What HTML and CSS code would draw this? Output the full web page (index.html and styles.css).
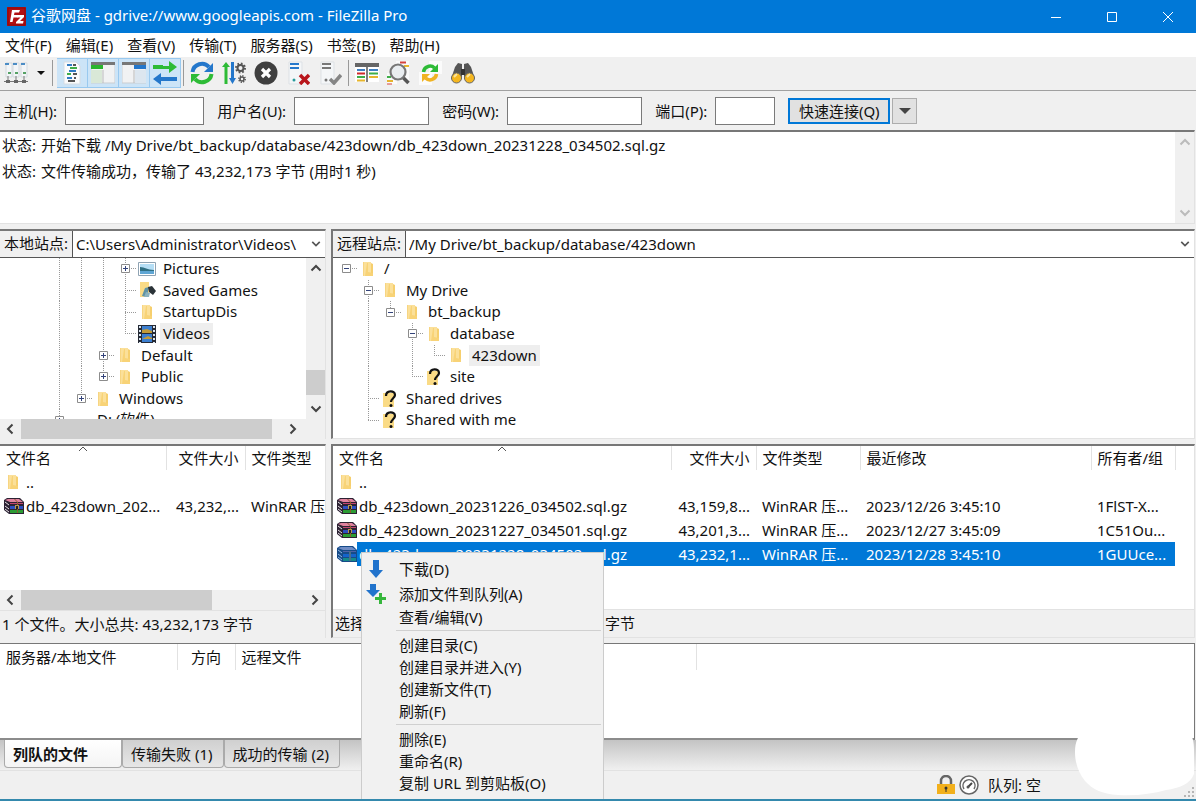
FILE: index.html
```html
<!DOCTYPE html>
<html lang="zh-CN">
<head>
  <meta charset="UTF-8" />
  <meta name="viewport" content="width=device-width,initial-scale=1.0"/>
  <title>谷歌网盘 - gdrive://www.googleapis.com - FileZilla Pro</title>
  <link rel="stylesheet" href="styles.css">
</head>
<body>
  <!-- shared icons -->
  <svg class="defs" aria-hidden="true">
    <symbol id="folder" viewBox="0 0 16 16">
      <path d="M3 1h8v14H3z" fill="#fbe09a"/><path d="M11 2l2 1v12h-2z" fill="#f6cf6e"/><path d="M7 2h1v9l5 1v3H5z" fill="#f8d377"/><path d="M3 1h1v14H3z" fill="#f7d582"/>
    </symbol>
    <symbol id="unknown" viewBox="0 0 16 18">
      <path d="M1 3h11v14H1z" fill="#fadb86"/>
      <path d="M4 6c0-6 9-6 9-1 0 3-4 3.500-4 7" fill="none" stroke="#111" stroke-width="2.200"/><circle cx="9" cy="15.500" r="1.500" fill="#111"/>
    </symbol>
    <symbol id="pictures" viewBox="0 0 18 14">
      <path d="M.5.5h17v13H.5z" fill="#fff" stroke="#8fa3b3"/><path d="M2 2h14v10H2z" fill="#b5def5"/><path d="M2 5c5 0 7 3 14 3v2H2z" fill="#2f6f83"/><path d="M2 9h14v3H2z" fill="#5fa6d4"/>
    </symbol>
    <symbol id="games" viewBox="0 0 18 18">
      <path d="M2 1h9v15H2z" fill="#fadb86"/><path d="M4 15l3-8 4-1-2 10z" fill="#5f93a5"/><path d="M10 6l4-1 4 5-3 4-4-3z" fill="#2b3338"/><path d="M8 11l4 1-1 4H6z" fill="#8ab2bd"/>
    </symbol>
    <symbol id="videos" viewBox="0 0 18 18">
      <path d="M0 0h18v18H0z" fill="#262b36"/><path d="M4 1h10v7H4zM4 9h10v8H4z" fill="#3c7fd0"/><path d="M4 5l5-1 5 2v2H4zM4 14l6-3 4 2v1z" fill="#c29a37"/>
      <path d="M2 1v17M16 1v17" stroke="#dbe7f2" stroke-width="2" stroke-dasharray="2 2"/>
    </symbol>
    <symbol id="plus" viewBox="0 0 9 9"><path d="M.5.5h8v8h-8z" fill="#fff" stroke="#8c8c8c"/><path d="M2 4.500h5M4.500 2v5" stroke="#33437a"/></symbol>
    <symbol id="minus" viewBox="0 0 9 9"><path d="M.5.5h8v8h-8z" fill="#fff" stroke="#8c8c8c"/><path d="M2 4.500h5" stroke="#33437a"/></symbol>
    <symbol id="rar" viewBox="0 0 20 16">
      <path d="M0 2l3-2h13l4 4v12H5L0 12z" fill="#2c2233"/>
      <path d="M1 2l3-1h11l4 3H6z" fill="#e0829f"/><path d="M6 5h13v1H6z" fill="#c4456f"/>
      <path d="M6 8h13v3H6z" fill="#2b4fc0"/><path d="M6 12h13v3H6z" fill="#2c9c34"/>
      <path d="M1 4l4 3M1 8l4 3M1 11l4 3" stroke="#e8e2e6" fill="none"/>
      <path d="M10 1l3 3v11h1V4l-3-3z" fill="#8a5f2e"/><path d="M11 7h4v4h-4z" fill="#b9974f"/><path d="M12 8h2v3h-2z" fill="#222"/>
    </symbol>
    <symbol id="rar-sel" viewBox="0 0 20 16">
      <path d="M0 2l3-2h13l4 4v12H5L0 12z" fill="#164b88"/>
      <path d="M1 2l3-1h11l4 3H6z" fill="#6f8cc4"/><path d="M6 5h13v1H6z" fill="#4f60a6"/>
      <path d="M6 8h13v3H6z" fill="#1464cc"/><path d="M6 12h13v3H6z" fill="#158a8a"/>
      <path d="M1 4l4 3M1 8l4 3M1 11l4 3" stroke="#8fb6e2" fill="none"/><path d="M12 5h2v10h-2z" fill="#4a6f88"/>
    </symbol>
    <symbol id="up" viewBox="0 0 12 12"><path d="M1.500 8.500L6 4l4.500 4.500" fill="none" stroke="currentColor" stroke-width="2"/></symbol>
    <symbol id="down" viewBox="0 0 12 12"><path d="M1.500 3.500L6 8l4.500-4.500" fill="none" stroke="currentColor" stroke-width="2"/></symbol>
    <symbol id="left" viewBox="0 0 12 12"><path d="M8.500 1.500L4 6l4.500 4.500" fill="none" stroke="currentColor" stroke-width="2"/></symbol>
    <symbol id="right" viewBox="0 0 12 12"><path d="M3.500 1.500L8 6l-4.500 4.500" fill="none" stroke="currentColor" stroke-width="2"/></symbol>
    <symbol id="sort" viewBox="0 0 10 6"><path d="M1 5l4-4 4 4" fill="none" stroke="#555"/></symbol>
    <symbol id="page" viewBox="0 0 24 24"><path d="M4 1h12l4 4v18H4z" fill="#fafbfc" stroke="#d5dce3"/></symbol>
    <symbol id="server" viewBox="0 0 24 24"><path d="M3 1h13v22H3z" fill="#f4f6f8" stroke="#dde1e5"/></symbol>
  </svg>

  <div class="window">
    <header class="titlebar">
      <svg class="logo" viewBox="0 0 19 19">
        <path d="M0 0h19v19H0z" fill="#b10f12"/><path d="M1 1h17v17H1z" fill="none" stroke="#8d0a0c"/>
        <path d="M5 3h8l-1 2.500H7.500L7 8h4l-.5 2.500h-4L5.500 15H3z" fill="#fff"/><path d="M10 8h7v2l-4 4h3.500L16 16.500H9V15l4.500-4.500H10z" fill="#fff"/>
      </svg>
      <h1>谷歌网盘 - gdrive://www.googleapis.com - FileZilla Pro</h1>
      <div class="win-buttons">
        <button aria-label="最小化"><svg viewBox="0 0 12 12"><path d="M1 6.500h10"/></svg></button>
        <button aria-label="最大化"><svg viewBox="0 0 12 12"><path d="M1.500 1.500h9v9h-9z"/></svg></button>
        <button aria-label="关闭"><svg viewBox="0 0 12 12"><path d="M1 1l10 10M11 1L1 11"/></svg></button>
      </div>
    </header>

    <nav class="menubar">
      <button>文件(F)</button>
      <button>编辑(E)</button>
      <button>查看(V)</button>
      <button>传输(T)</button>
      <button>服务器(S)</button>
      <button>书签(B)</button>
      <button>帮助(H)</button>
    </nav>

    <div class="toolbar">
      <button aria-label="站点管理器"><svg viewBox="0 0 24 24">
        <path d="M2 2h6v14H2zM9 2h6v14H9zM17 2h6v14h-6z" fill="#f3f5f7" stroke="#d3d9de"/>
        <path d="M1 3h4M9 3h4M17 3h4" stroke="#4b8cc5" stroke-width="2"/><path d="M4 12h3M11 12h3M19 12h3" stroke="#55a165" stroke-width="2"/>
        <path d="M4 15v4M12 15v4M20 15v4M0 20.500h24" stroke="#777" fill="none"/><path d="M2 19h4v3H2zM10 19h4v3h-4zM18 19h4v3h-4z" fill="#666"/>
      </svg></button>
      <button class="arrow" aria-label="站点列表"><svg viewBox="0 0 8 8"><path d="M0 2h8L4 6z" fill="#111"/></svg></button>
      <span class="sep"></span>
      <div class="toggles">
        <button aria-label="消息日志" aria-pressed="true"><svg viewBox="0 0 24 24"><use href="#page"/>
          <path d="M7 4h5M9 10h7M7 17h5" stroke="#2f7bc4" stroke-width="2"/><path d="M10 7h7M7 13h4" stroke="#3fae49" stroke-width="2"/><path d="M13 4h3M13 13h4M8 20h7M14 17h2" stroke="#555" stroke-width="2"/></svg></button>
        <button aria-label="本地目录树" aria-pressed="true"><svg viewBox="0 0 24 24"><path d="M0 2h24v20H0z" fill="#f1f2f3" stroke="#c9cdd1"/><path d="M0 1h24v3H0z" fill="#777"/><path d="M0 4h12v4H0z" fill="#2ab52f"/><path d="M0 9h11v13H0z" fill="#d9e8d7"/><path d="M12 9v13" stroke="#bbb"/></svg></button>
        <button aria-label="远程目录树" aria-pressed="true"><svg viewBox="0 0 24 24"><path d="M0 2h24v20H0z" fill="#f1f2f3" stroke="#c9cdd1"/><path d="M0 1h24v3H0z" fill="#777"/><path d="M12 4h12v4H12z" fill="#2477cb"/><path d="M13 9h11v13H13z" fill="#dce6ef"/><path d="M12 9v13" stroke="#bbb"/></svg></button>
        <button aria-label="传输队列" aria-pressed="true"><svg viewBox="0 0 24 24"><path d="M0 4h10v1h6V0l8 6-8 6V8H0z" fill="#2dbb36"/><path d="M24 16H8v-4l-8 6 8 6v-4h16z" fill="#2477cb"/></svg></button>
      </div>
      <span class="sep"></span>
      <button aria-label="刷新"><svg viewBox="0 0 24 24"><path d="M2.500 11A9.500 9.500 0 0 1 19 6" fill="none" stroke="#2477cb" stroke-width="4"/><path d="M23 2v9h-9z" fill="#2477cb"/><path d="M21.500 13A9.500 9.500 0 0 1 5 18" fill="none" stroke="#2dbb36" stroke-width="4"/><path d="M1 22v-9h9z" fill="#2dbb36"/></svg></button>
      <button aria-label="处理队列"><svg viewBox="0 0 24 24"><path d="M4 1l4 5H5.500v17h-3V6H0z" fill="#2dbb36"/><path d="M9 1h3v16h2l-3.500 6L7 17h2z" fill="#2477cb"/><g fill="none" stroke="#555"><circle cx="18.500" cy="7" r="3" stroke-width="2"/><circle cx="18.500" cy="7" r="4.500" stroke-width="2" stroke-dasharray="1.700 1.800"/><circle cx="20" cy="18" r="2" stroke-width="1.500"/><circle cx="20" cy="18" r="3.200" stroke-width="1.500" stroke-dasharray="1.200 1.300"/></g></svg></button>
      <button aria-label="取消"><svg viewBox="0 0 24 24"><circle cx="12" cy="12" r="11.500" fill="#3f3f3f"/><path d="M8 8l8 8M16 8l-8 8" stroke="#fff" stroke-width="3.200"/></svg></button>
      <button aria-label="断开连接"><svg viewBox="0 0 24 24"><use href="#server"/><path d="M4 3h9M4 7h9" stroke="#2477cb" stroke-width="2"/><circle cx="8" cy="19" r="1.500" fill="#2a9b9b"/><path d="M14 14l9 9M23 14l-9 9" stroke="#b8151b" stroke-width="3.500"/></svg></button>
      <button aria-label="重新连接"><svg viewBox="0 0 24 24"><use href="#server"/><path d="M4 3h9M4 7h9" stroke="#777" stroke-width="2"/><circle cx="8" cy="19" r="1.500" fill="#777"/><path d="M12 18l4 4 7-8" fill="none" stroke="#858585" stroke-width="3.500"/></svg></button>
      <span class="sep"></span>
      <button aria-label="过滤"><svg viewBox="0 0 24 24"><path d="M0 2h24v19H0z" fill="#fff"/><path d="M0 2h24v4H0z" fill="#666"/><path d="M2 9h8M14 9h9" stroke="#3f7fc1" stroke-width="2"/><path d="M2 12.500h8" stroke="#d02a2a" stroke-width="2"/><path d="M14 12.500h9M2 16h8" stroke="#3fae49" stroke-width="2"/><path d="M14 16h9M2 19.500h8" stroke="#e7b52d" stroke-width="2"/><path d="M12 6v15" stroke="#555" stroke-width="1.500"/></svg></button>
      <button aria-label="目录对比"><svg viewBox="0 0 24 24"><path d="M9 0h13v20H9zM0 12h10v11H0z" fill="#fafafa"/><path d="M13 1.500h6" stroke="#d5433c" stroke-width="2"/><path d="M17 5h5" stroke="#e7b52d" stroke-width="2"/><path d="M0 16h4" stroke="#3fae49" stroke-width="2"/><path d="M0 20h6" stroke="#e7b52d" stroke-width="2"/><path d="M0 23h5" stroke="#d5433c"/><circle cx="11" cy="11" r="7.500" fill="#e9edf0" stroke="#777" stroke-width="2.200"/><path d="M16.500 17l5 5" stroke="#555" stroke-width="3.500"/></svg></button>
      <button aria-label="同步浏览"><svg viewBox="0 0 24 24"><path d="M10 0h13v13H10zM0 11h13v13H0z" fill="#fbfbfb"/><path d="M4.500 11a6.500 6.500 0 0 1 11-4" fill="none" stroke="#2dbb36" stroke-width="3.500"/><path d="M19 3v8h-8z" fill="#2dbb36"/><path d="M17.500 13a6.500 6.500 0 0 1-11 4" fill="none" stroke="#f0b323" stroke-width="3.500"/><path d="M3 21v-8h8z" fill="#f0b323"/></svg></button>
      <button aria-label="查找文件"><svg viewBox="0 0 24 24"><path d="M7 2l4 1v15H0l4-12zM17 2l-4 1v15h11L20 6z" fill="#555"/><path d="M10 8h4v6h-4z" fill="#333"/><circle cx="5.500" cy="17" r="5" fill="#f5b720" stroke="#666"/><circle cx="18.500" cy="17" r="5" fill="#f5b720" stroke="#666"/><path d="M3 16l3-3M16 16l3-3" stroke="#fce49a" stroke-width="2"/></svg></button>
    </div>

    <form class="quickconnect">
      <label for="host">主机(H):</label><input id="host" class="host" type="text">
      <label for="user">用户名(U):</label><input id="user" type="text">
      <label for="pass">密码(W):</label><input id="pass" type="password">
      <label for="port">端口(P):</label><input id="port" class="port" type="text">
      <button type="button" class="connect">快速连接(Q)</button>
      <button type="button" class="history" aria-label="历史记录"><svg viewBox="0 0 12 12"><path d="M0 3h12L6 9z" fill="#444"/></svg></button>
    </form>

    <main class="main">
      <section class="log">
        <div class="messages">
          <p><span>状态:</span>开始下载 /My Drive/bt_backup/database/423down/db_423down_20231228_034502.sql.gz</p>
          <p><span>状态:</span>文件传输成功，传输了 43,232,173 字节 (用时1 秒)</p>
        </div>
        <div class="vscroll disabled"><svg><use href="#up"/></svg><svg><use href="#down"/></svg></div>
      </section>

      <div class="panes">
        <section class="pane">
          <div class="sitebar">
            <label for="local">本地站点:</label>
            <div class="combo"><select id="local"><option>C:\Users\Administrator\Videos\</option></select><svg><use href="#down"/></svg></div>
          </div>
          <div class="tree-row">
            <div class="tree-view">
              <ul class="tree local">
                <li><i class="v"></i><i class="v"></i><i class="v"></i><i class="v h"><svg><use href="#plus"/></svg></i><b><svg class="pic"><use href="#pictures"/></svg></b><span>Pictures</span></li>
                <li><i class="v"></i><i class="v"></i><i class="v"></i><i class="v h"></i><b><svg class="big"><use href="#games"/></svg></b><span>Saved Games</span></li>
                <li><i class="v"></i><i class="v"></i><i class="v"></i><i class="v h"></i><b><svg><use href="#folder"/></svg></b><span>StartupDis</span></li>
                <li><i class="v"></i><i class="v"></i><i class="v"></i><i class="end"></i><b><svg class="big"><use href="#videos"/></svg></b><span class="current">Videos</span></li>
                <li><i class="v"></i><i class="v"></i><i class="v h"><svg><use href="#plus"/></svg></i><b><svg><use href="#folder"/></svg></b><span>Default</span></li>
                <li><i class="v"></i><i class="v"></i><i class="end"><svg><use href="#plus"/></svg></i><b><svg><use href="#folder"/></svg></b><span>Public</span></li>
                <li><i class="v"></i><i class="end"><svg><use href="#plus"/></svg></i><b><svg><use href="#folder"/></svg></b><span>Windows</span></li>
                <li><i class="v h"><svg><use href="#plus"/></svg></i><b></b><span>D: (软件)</span></li>
              </ul>
            </div>
            <div class="vscroll"><svg><use href="#up"/></svg><div class="track"><div class="thumb"></div></div><svg><use href="#down"/></svg></div>
          </div>
          <div class="hscroll tree-scroll"><svg><use href="#left"/></svg><div class="track"><div class="thumb"></div></div><svg><use href="#right"/></svg></div>
        </section>

        <section class="pane remote">
          <div class="sitebar">
            <label for="remote">远程站点:</label>
            <div class="combo"><select id="remote"><option>/My Drive/bt_backup/database/423down</option></select><svg><use href="#down"/></svg></div>
          </div>
          <div class="tree-view">
            <ul class="tree">
              <li><i class="h"><svg><use href="#minus"/></svg></i><b><svg><use href="#folder"/></svg></b><span>/</span></li>
              <li><i></i><i class="v h"><svg><use href="#minus"/></svg></i><b><svg><use href="#folder"/></svg></b><span>My Drive</span></li>
              <li><i></i><i class="v"></i><i class="end"><svg><use href="#minus"/></svg></i><b><svg><use href="#folder"/></svg></b><span>bt_backup</span></li>
              <li><i></i><i class="v"></i><i></i><i class="v h"><svg><use href="#minus"/></svg></i><b><svg><use href="#folder"/></svg></b><span>database</span></li>
              <li><i></i><i class="v"></i><i></i><i class="v"></i><i class="end"></i><b><svg><use href="#folder"/></svg></b><span class="current">423down</span></li>
              <li><i></i><i class="v"></i><i></i><i class="end"></i><b><svg class="big"><use href="#unknown"/></svg></b><span>site</span></li>
              <li><i></i><i class="v h"></i><b><svg class="big"><use href="#unknown"/></svg></b><span>Shared drives</span></li>
              <li><i></i><i class="end"></i><b><svg class="big"><use href="#unknown"/></svg></b><span>Shared with me</span></li>
            </ul>
          </div>
        </section>
      </div>

      <div class="panes">
        <section class="pane">
          <div class="list">
            <table class="local-files">
              <colgroup><col class="c-name"><col class="c-size"><col class="c-type"></colgroup>
              <thead><tr><th>文件名<svg class="sort"><use href="#sort"/></svg></th><th class="num">文件大小</th><th>文件类型</th></tr></thead>
              <tbody>
                <tr><td class="name"><div><b><svg class="dir"><use href="#folder"/></svg></b>..</div></td><td></td><td></td></tr>
                <tr><td class="name"><div><b><svg><use href="#rar"/></svg></b>db_423down_202...</div></td><td class="num">43,232,...</td><td>WinRAR 压缩文件</td></tr>
              </tbody>
            </table>
          </div>
          <div class="hscroll list-scroll"><svg><use href="#left"/></svg><div class="track"><div class="thumb"></div></div><svg><use href="#right"/></svg></div>
          <p class="summary">1 个文件。大小总共: 43,232,173 字节</p>
        </section>

        <section class="pane remote">
          <div class="list">
            <table class="remote-files">
              <colgroup><col class="c-name"><col class="c-size"><col class="c-type"><col class="c-date"><col class="c-owner"></colgroup>
              <thead><tr><th>文件名<svg class="sort"><use href="#sort"/></svg></th><th class="num">文件大小</th><th>文件类型</th><th>最近修改</th><th>所有者/组</th></tr></thead>
              <tbody>
                <tr><td class="name"><div><b><svg class="dir"><use href="#folder"/></svg></b>..</div></td><td></td><td></td><td></td><td></td></tr>
                <tr><td class="name"><div><b><svg><use href="#rar"/></svg></b>db_423down_20231226_034502.sql.gz</div></td><td class="num">43,159,8...</td><td>WinRAR 压...</td><td>2023/12/26 3:45:10</td><td>1FlST-X...</td></tr>
                <tr><td class="name"><div><b><svg><use href="#rar"/></svg></b>db_423down_20231227_034501.sql.gz</div></td><td class="num">43,201,3...</td><td>WinRAR 压...</td><td>2023/12/27 3:45:09</td><td>1C51Ou...</td></tr>
                <tr class="selected"><td class="name"><div><b><svg><use href="#rar-sel"/></svg></b>db_423down_20231228_034502.sql.gz</div></td><td class="num">43,232,1...</td><td>WinRAR 压...</td><td>2023/12/28 3:45:10</td><td>1GUUce...</td></tr>
              </tbody>
            </table>
          </div>
          <p class="summary">选择了 1 个文件。大小总共: 43,232,173 字节</p>
        </section>
      </div>

      <section class="queue">
        <table>
          <colgroup><col class="q-local"><col class="q-dir"><col class="q-remote"><col></colgroup>
          <thead><tr><th>服务器/本地文件</th><th class="mid">方向</th><th>远程文件</th><th></th></tr></thead>
        </table>
      </section>
    </main>

    <div class="tabs">
      <button class="active">列队的文件</button>
      <button>传输失败 (1)</button>
      <button>成功的传输 (2)</button>
    </div>

    <footer class="statusbar">
      <svg class="lock" viewBox="0 0 20 20"><path d="M5 10V6a5 5 0 0 1 10 0v4" fill="none" stroke="#666" stroke-width="2.500"/><path d="M1 9h18v10H1z" fill="#f2b01c"/><circle cx="10" cy="13" r="1.500" fill="#333"/><path d="M9.500 13h1v4h-1z" fill="#333"/></svg>
      <svg class="gauge" viewBox="0 0 20 20"><circle cx="10" cy="10" r="9" fill="#fff" stroke="#666" stroke-width="1.500"/><path d="M5 14a6 6 0 1 1 10 0" fill="none" stroke="#666" stroke-width="1.500"/><path d="M9 12l4-4" stroke="#444" stroke-width="2"/><circle cx="9" cy="12" r="1.500" fill="#555"/></svg>
      <span>队列: 空</span>
      <svg class="grip" viewBox="0 0 12 12"><path d="M8 0h2v2H8zM4 4h2v2H4zM8 4h2v2H8zM0 8h2v2H0zM4 8h2v2H4zM8 8h2v2H8z" fill="#b5b5b5"/></svg>
    </footer>

    <svg class="blob" viewBox="0 0 120 68"><path d="M10 2L26 0h72l14 2c6 5 7 12 7 20v24c-4 10-14 14-28 16-14 4-30 6-48 5-16-1-26-6-33-14C3 44 0 34 0 24 0 14 3 7 10 2z" fill="#fff"/></svg>

    <div class="context-menu" role="menu">
      <button role="menuitem" class="with-icon"><svg viewBox="0 0 20 20"><path d="M7 1h6v10h4l-7 8-7-8h4z" fill="#2173cc"/></svg>下载(D)</button>
      <button role="menuitem" class="with-icon"><svg viewBox="0 0 20 20"><path d="M4 0h6v6h4l-7 7-7-7h4z" fill="#2173cc"/><path d="M13 9h3v4h4v3h-4v4h-3v-4H9v-3h4z" fill="#36b63c"/></svg>添加文件到队列(A)</button>
      <button role="menuitem">查看/编辑(V)</button>
      <hr>
      <button role="menuitem">创建目录(C)</button>
      <button role="menuitem">创建目录并进入(Y)</button>
      <button role="menuitem">创建新文件(T)</button>
      <button role="menuitem">刷新(F)</button>
      <hr>
      <button role="menuitem">删除(E)</button>
      <button role="menuitem">重命名(R)</button>
      <button role="menuitem">复制 URL 到剪贴板(O)</button>
      <button role="menuitem">Share</button>
    </div>
  </div>
</body>
</html>
```
FILE: styles.css
```css
:root {
  --accent: #0078d7;
  --face: #f0f0f0;
  --edge: #777;
  --line: #e2e2e2;
  --thumb: #cdcdcd;
  --text: #111;
}
* { box-sizing: border-box; margin: 0; padding: 0; }
body {
  font-family: "Noto Sans", "Noto Sans CJK SC", sans-serif;
  font-size: 15px;
  line-height: 22px;
  color: var(--text);
  background: var(--face);
}
button, input, select { font: inherit; color: inherit; }
button { border: none; background: none; white-space: nowrap; }
svg { display: block; flex: none; }
.defs { position: absolute; width: 0; height: 0; }

.window {
  position: relative;
  display: flex;
  flex-direction: column;
  height: 100vh;
  overflow: hidden;
  border-bottom: 2px solid #3489ad;
}

/* title bar */
.titlebar {
  display: flex;
  align-items: center;
  flex: none;
  height: 33px;
  padding-left: 7px;
  gap: 5px;
  background: var(--accent);
  color: #fff;
}
.titlebar .logo { width: 19px; height: 19px; }
.titlebar h1 { flex: 1; font-size: 15px; font-weight: 400; padding-bottom: 3px; }
.win-buttons { display: flex; }
.win-buttons button {
  display: flex;
  align-items: center;
  justify-content: center;
  width: 56px;
  height: 30px;
}
.win-buttons svg { width: 12px; height: 12px; fill: none; stroke: #fff; }

/* menu bar */
.menubar {
  display: flex;
  flex: none;
  height: 24px;
  gap: 14px;
  padding-left: 5px;
  background: #fff;
}

/* tool bar */
.toolbar {
  display: flex;
  align-items: center;
  flex: none;
  height: 34px;
  padding-bottom: 2px;
  border-bottom: 1px solid #a0a0a0;
}
.toolbar button {
  display: flex;
  align-items: center;
  justify-content: center;
  width: 32px;
  height: 30px;
}
.toolbar svg { width: 24px; height: 24px; }
.toolbar .arrow { width: 18px; }
.toolbar .arrow svg { width: 8px; height: 8px; }
.toolbar .sep { width: 1px; height: 26px; margin: 0 2px; background: #999; }
.toggles { display: flex; padding-left: 2px; }
.toolbar .toggles button {
  width: 31px;
  background: #cce4f7;
  border: 1px solid #99c9ef;
  border-left-width: 0;
}

/* quick connect */
.quickconnect {
  display: flex;
  align-items: center;
  flex: none;
  height: 39px;
  padding-left: 3px;
}
.quickconnect input {
  width: 135px;
  height: 28px;
  margin: 0 13px 0 8px;
  padding: 0 4px;
  border: 1px solid #7a7a7a;
  background: #fff;
}
.quickconnect .host { width: 139px; }
.quickconnect .port { width: 60px; }
.quickconnect .connect {
  width: 102px;
  height: 26px;
  border: 2px solid var(--accent);
  background: #e1e1e1;
}
.quickconnect .history {
  display: flex;
  align-items: center;
  justify-content: center;
  width: 25px;
  height: 26px;
  margin-left: 2px;
  border: 1px solid #adadad;
  background: #e1e1e1;
}
.history svg { width: 12px; height: 12px; }

/* splitter area */
.main {
  flex: 1;
  min-height: 0;
  display: grid;
  grid-template-columns: minmax(0, 1fr);
  grid-template-rows: minmax(0, 94fr) minmax(0, 210fr) minmax(0, 194fr) minmax(0, 97fr);
  gap: 5px;
  padding-right: 1px;
}
.log {
  display: flex;
  border-top: 2px solid var(--edge);
  border-right: 1px solid var(--line);
  border-bottom: 1px solid var(--line);
  background: #fff;
}
.messages { flex: 1; padding-left: 2px; line-height: 26px; }
.messages span { display: inline-block; width: 39px; }
.panes {
  display: grid;
  grid-template-columns: 326px minmax(0, 1fr);
  gap: 5px;
}
.pane {
  display: flex;
  flex-direction: column;
  min-width: 0;
  min-height: 0;
  border-top: 2px solid var(--edge);
  border-right: 1px solid var(--line);
  background: #fff;
}
.pane.remote { border-left: 2px solid var(--edge); border-bottom: 1px solid var(--line); }

/* scroll bars */
.vscroll, .hscroll {
  display: flex;
  align-items: center;
  justify-content: space-between;
  flex: none;
  background: var(--face);
  color: #444;
}
.vscroll { flex-direction: column; width: 19px; padding: 4px 0; }
.hscroll { height: 20px; padding: 0 4px; }
.vscroll svg, .hscroll svg { width: 12px; height: 12px; }
.vscroll.disabled { color: #bbb; }
.track { display: flex; flex: 1; align-self: stretch; }
.vscroll .track { flex-direction: column; justify-content: flex-end; padding-bottom: 8px; }
.vscroll .thumb { height: 25px; background: var(--thumb); }
.hscroll .track { padding-left: 5px; }
.hscroll .thumb { background: var(--thumb); }
.tree-scroll .thumb { width: 251px; }
.tree-scroll { padding-right: 26px; }
.list-scroll .thumb { width: 191px; }

/* site path */
.sitebar {
  display: flex;
  flex: none;
  height: 27px;
  line-height: 24px;
  border-bottom: 1px solid #555;
}
.sitebar label {
  padding: 0 4px;
  background: var(--face);
  border-right: 1px solid #555;
}
.combo { position: relative; flex: 1; min-width: 0; }
.combo select {
  width: 100%;
  height: 26px;
  padding: 0 22px 0 3px;
  border: none;
  appearance: none;
  background: #fff;
}
.combo svg {
  position: absolute;
  right: 4px;
  top: 8px;
  width: 10px;
  height: 10px;
  color: #555;
  pointer-events: none;
}

/* directory trees */
.tree-row { display: flex; flex: 1; min-height: 0; }
.tree-view { flex: 1; min-height: 0; overflow: hidden; }
.tree {
  display: grid;
  grid-auto-rows: 1fr;
  height: 173px;
  padding-left: 2px;
  list-style: none;
}
.tree.local { padding-left: 48px; }
.tree li { display: flex; align-items: stretch; }
.tree i, .tree b {
  display: flex;
  align-items: center;
  justify-content: center;
  flex: none;
  width: 22px;
}
.tree i {
  --dots-v: repeating-linear-gradient(#999 0 1px, transparent 1px 2px);
  --dots-h: repeating-linear-gradient(90deg, #999 0 1px, transparent 1px 2px);
  background-repeat: no-repeat;
}
.tree i.v { background-image: var(--dots-v); background-size: 1px 100%; background-position: 50% 0; }
.tree i.h { background-image: var(--dots-h); background-size: 50% 1px; background-position: 100% 50%; }
.tree i.v.h {
  background-image: var(--dots-v), var(--dots-h);
  background-size: 1px 100%, 50% 1px;
  background-position: 50% 0, 100% 50%;
}
.tree i.end {
  background-image: var(--dots-v), var(--dots-h);
  background-size: 1px 50%, 50% 1px;
  background-position: 50% 0, 100% 50%;
}
.tree i svg { width: 9px; height: 9px; }
.tree b svg { width: 16px; height: 16px; }
.tree b .big { width: 18px; height: 18px; }
.tree b .pic { width: 18px; height: 14px; }
.tree span { padding: 0 3px; margin-left: 2px; line-height: 21px; }
.tree .current { background: #eee; }

/* file lists */
.list { flex: 1; min-height: 0; overflow: hidden; }
table { border-collapse: collapse; table-layout: fixed; }
th {
  position: relative;
  height: 24px;
  padding: 0 6px;
  border-right: 1px solid var(--line);
  font-weight: 400;
  text-align: left;
  white-space: nowrap;
}
td { height: 24px; padding: 0 6px; line-height: 22px; white-space: nowrap; overflow: hidden; }
td.name { padding: 0; }
.num { text-align: right; padding-right: 6px; }
.mid { text-align: center; }
.sort { position: absolute; left: 50%; top: 0; width: 10px; height: 6px; margin-left: -5px; }
.name div { display: flex; align-items: center; height: 24px; }
.name b {
  display: flex;
  align-items: center;
  justify-content: flex-end;
  flex: none;
  width: 24px;
  height: 24px;
  margin-right: 2px;
}
.name svg { width: 20px; height: 16px; }
.name .dir { width: 16px; height: 16px; margin-right: 3px; }
.local-files { width: 345px; }
.remote-files { width: 842px; }
.c-name { width: 338px; }
.c-size { width: 85px; }
.c-type { width: 104px; }
.c-date { width: 231px; }
.c-owner { width: 84px; }
.local-files .c-name { width: 166px; }
.local-files .c-size { width: 79px; }
.local-files .c-type { width: 100px; }
.selected td { background: var(--accent); color: #fff; }
.selected b { background: #fff; }
.summary {
  flex: none;
  height: 28px;
  padding: 2px;
  border-top: 1px solid var(--line);
  background: var(--face);
  white-space: nowrap;
}

/* transfer queue */
.queue {
  border-top: 1px solid var(--edge);
  border-right: 1px solid var(--edge);
  border-bottom: 2px solid #8c8c8c;
  background: #fff;
}
.queue table { width: 100%; }
.queue th { height: 26px; }
.queue th:last-child { border-right: none; }
.q-local { width: 177px; }
.q-dir { width: 58px; }
.q-remote { width: 461px; }

.tabs {
  display: flex;
  align-items: flex-start;
  flex: none;
  height: 31px;
  padding-left: 4px;
  background: linear-gradient(#c4c4c4, #f0f0f0);
  border-bottom: 1px solid var(--line);
}
.tabs button {
  height: 28px;
  padding: 0 10px 0 8px;
  line-height: 26px;
  border: 1px solid #aaa;
  border-top: none;
  border-radius: 0 0 4px 4px;
  background: linear-gradient(#d0d0d0, #e6e6e6);
}
.tabs .active { padding-right: 33px; font-weight: 700; background: linear-gradient(#fff, #f4f4f4); }

.statusbar {
  display: flex;
  align-items: center;
  justify-content: flex-end;
  flex: none;
  height: 28px;
  gap: 3px;
}
.statusbar .lock, .statusbar .gauge { width: 20px; height: 20px; }
.statusbar span { padding: 0 140px 0 6px; }
.grip { width: 12px; height: 12px; align-self: flex-end; }

/* cloud over the lower right corner */
.blob { position: absolute; right: 1px; bottom: 3px; width: 120px; height: 68px; }

/* popup over the remote list */
.context-menu {
  position: absolute;
  left: 361px;
  top: 552px;
  width: 243px;
  padding: 3px 2px;
  border: 1px solid #ccc;
  background: #f1f1f1;
}
.context-menu button {
  display: flex;
  align-items: center;
  width: 100%;
  height: 22px;
  padding-left: 35px;
}
.context-menu .with-icon { height: 25px; padding-left: 2px; gap: 13px; }
.context-menu svg { width: 20px; height: 20px; }
.context-menu hr { height: 1px; margin: 2px 0 3px 32px; border: none; background: #d0d0d0; }
```
